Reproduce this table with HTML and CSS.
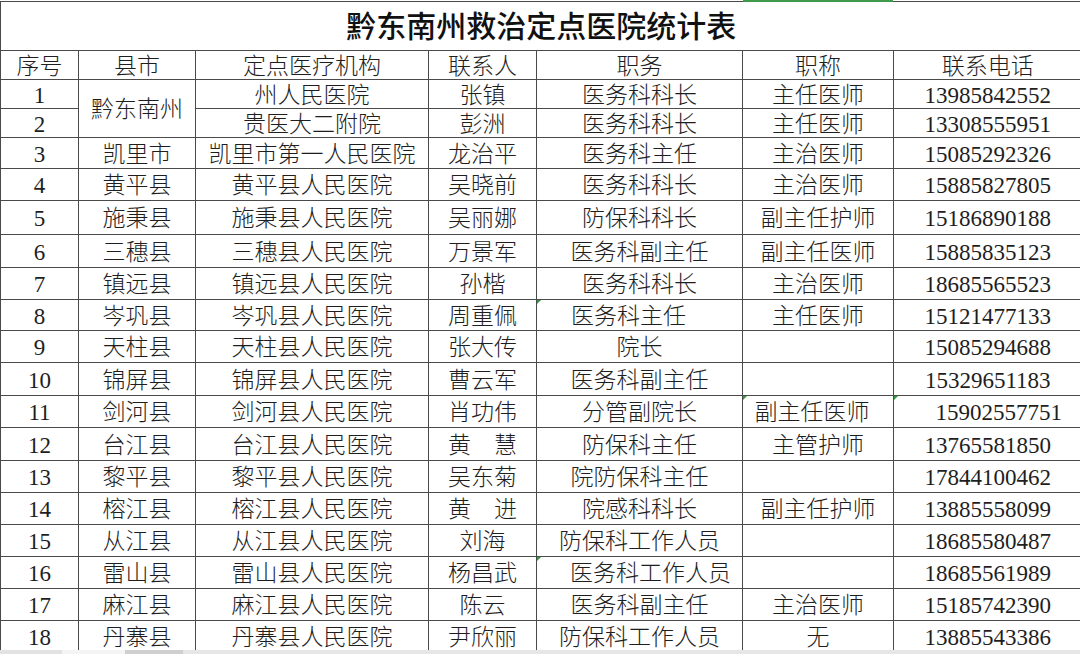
FILE: index.html
```html
<!DOCTYPE html>
<html lang="zh">
<head>
<meta charset="utf-8">
<title>黔东南州救治定点医院统计表</title>
<link rel="stylesheet" href="styles.css">
</head>
<body>
<div class="sheet">
  <div class="select-line"></div>
  <table class="grid">
    <colgroup>
      <col class="c-no"><col class="c-county"><col class="c-org"><col class="c-person"><col class="c-duty"><col class="c-title"><col class="c-phone">
    </colgroup>
    <tr class="r-title"><td colspan="7" class="title">黔东南州救治定点医院统计表</td></tr>
    <tr class="r-head">
      <td>序号</td><td>县市</td><td>定点医疗机构</td><td>联系人</td><td>职务</td><td>职称</td><td class="last">联系电话</td>
    </tr>
    <tr class="r-short"><td class="num">1</td><td rowspan="2">黔东南州</td><td>州人民医院</td><td>张镇</td><td>医务科科长</td><td>主任医师</td><td class="num last">13985842552</td></tr>
    <tr class="r-short"><td class="num">2</td><td>贵医大二附院</td><td>彭洲</td><td>医务科科长</td><td>主任医师</td><td class="num last">13308555951</td></tr>
    <tr class="r-a"><td class="num">3</td><td>凯里市</td><td>凯里市第一人民医院</td><td>龙治平</td><td>医务科主任</td><td>主治医师</td><td class="num last">15085292326</td></tr>
    <tr class="r-b"><td class="num">4</td><td>黄平县</td><td>黄平县人民医院</td><td>吴晓前</td><td>医务科科长</td><td>主治医师</td><td class="num last">15885827805</td></tr>
    <tr class="r-c"><td class="num">5</td><td>施秉县</td><td>施秉县人民医院</td><td>吴丽娜</td><td>防保科科长</td><td>副主任护师</td><td class="num last">15186890188</td></tr>
    <tr class="r-d"><td class="num">6</td><td>三穗县</td><td>三穗县人民医院</td><td>万景军</td><td>医务科副主任</td><td>副主任医师</td><td class="num last">15885835123</td></tr>
    <tr class="r-b"><td class="num">7</td><td>镇远县</td><td>镇远县人民医院</td><td>孙楷</td><td>医务科科长</td><td>主治医师</td><td class="num last">18685565523</td></tr>
    <tr class="r-a"><td class="num">8</td><td>岑巩县</td><td>岑巩县人民医院</td><td>周重佩</td><td class="flagged nudge-left">医务科主任<span class="flag"></span></td><td>主任医师</td><td class="num last">15121477133</td></tr>
    <tr class="r-b"><td class="num">9</td><td>天柱县</td><td>天柱县人民医院</td><td>张大传</td><td>院长</td><td></td><td class="num last">15085294688</td></tr>
    <tr class="r-d"><td class="num">10</td><td>锦屏县</td><td>锦屏县人民医院</td><td>曹云军</td><td>医务科副主任</td><td></td><td class="num last">15329651183</td></tr>
    <tr class="r-b"><td class="num">11</td><td>剑河县</td><td>剑河县人民医院</td><td>肖功伟</td><td>分管副院长</td><td class="flagged nudge-left-s">副主任医师<span class="flag"></span></td><td class="num last flagged nudge-right">15902557751<span class="flag"></span></td></tr>
    <tr class="r-d"><td class="num">12</td><td>台江县</td><td>台江县人民医院</td><td>黄　慧</td><td>防保科主任</td><td>主管护师</td><td class="num last">13765581850</td></tr>
    <tr class="r-b"><td class="num">13</td><td>黎平县</td><td>黎平县人民医院</td><td>吴东菊</td><td>院防保科主任</td><td></td><td class="num last">17844100462</td></tr>
    <tr class="r-b"><td class="num">14</td><td>榕江县</td><td>榕江县人民医院</td><td>黄　进</td><td>院感科科长</td><td>副主任护师</td><td class="num last">13885558099</td></tr>
    <tr class="r-b"><td class="num">15</td><td>从江县</td><td>从江县人民医院</td><td>刘海</td><td>防保科工作人员</td><td></td><td class="num last">18685580487</td></tr>
    <tr class="r-b"><td class="num">16</td><td>雷山县</td><td>雷山县人民医院</td><td>杨昌武</td><td class="flagged nudge-right">医务科工作人员<span class="flag"></span></td><td></td><td class="num last">18685561989</td></tr>
    <tr class="r-b"><td class="num">17</td><td>麻江县</td><td>麻江县人民医院</td><td>陈云</td><td>医务科副主任</td><td>主治医师</td><td class="num last">15185742390</td></tr>
    <tr class="r-b"><td class="num">18</td><td>丹寨县</td><td>丹寨县人民医院</td><td>尹欣丽</td><td>防保科工作人员</td><td>无</td><td class="num last">13885543386</td></tr>
  </table>
  <div class="hscroll"><span class="seg-a"></span><span class="seg-gap"></span><span class="seg-thumb"></span><span class="seg-rest"></span></div>
</div>
</body>
</html>
```

FILE: styles.css
```css
html, body {
  margin: 0;
  padding: 0;
  background: #ffffff;
  overflow: hidden;
}

.sheet {
  position: relative;
  width: 1080px;
  height: 654px;
  overflow: hidden;
  padding-top: 1px;
  box-sizing: border-box;
}

.grid {
  border-collapse: collapse;
  table-layout: fixed;
  width: 1081px;
  font-family: "Liberation Serif", "Noto Sans CJK SC", serif;
  font-size: 23px;
  color: #1e1e1e;
}

.c-no { width: 78px; }
.c-county { width: 117px; }
.c-org { width: 233px; }
.c-person { width: 108px; }
.c-duty { width: 206px; }
.c-title { width: 151px; }
.c-phone { width: 188px; }

.grid td {
  border: 1px solid #4a4a4a;
  padding: 2px 0 0 0;
  text-align: center;
  vertical-align: middle;
  white-space: nowrap;
  overflow: visible;
  line-height: 1;
  box-sizing: border-box;
  font-weight: 300;
}

.grid td.last {
  border-right: none;
}

.grid td.title {
  border-right: none;
  font-size: 30px;
  font-weight: 500;
  color: #111;
  letter-spacing: 0;
  padding-top: 1px;
}

.num {
  font-weight: 400;
}

.r-title td { height: 49px; }
.r-head td { height: 29px; }
.r-short td { height: 29px; }
.r-a td { height: 31px; }
.r-b td { height: 32px; }
.r-c td { height: 34px; }
.r-d td { height: 33px; }

.flagged {
  position: relative;
}

.flag {
  position: absolute;
  left: 0;
  top: 0;
  width: 0;
  height: 0;
  border-top: 4px solid #2e9a3c;
  border-right: 4px solid transparent;
}

.grid td.nudge-left { padding-right: 22px; }
.grid td.nudge-left-s { padding-right: 12px; }
.grid td.nudge-right { padding-left: 22px; }

.select-line {
  position: absolute;
  left: 743px;
  top: 0;
  width: 150px;
  height: 2px;
  background: #3f9a4a;
}

.hscroll {
  position: absolute;
  left: 0;
  bottom: 0;
  width: 1080px;
  height: 4px;
  display: flex;
  background: #e4e4e4;
}

.seg-a { width: 62px; background: #e2e2e2; }
.seg-gap { width: 63px; background: #f4f4f4; }
.seg-thumb { width: 58px; background: #cfcfcf; }
.seg-rest { flex: 1; background: #e6e6e6; }
```
